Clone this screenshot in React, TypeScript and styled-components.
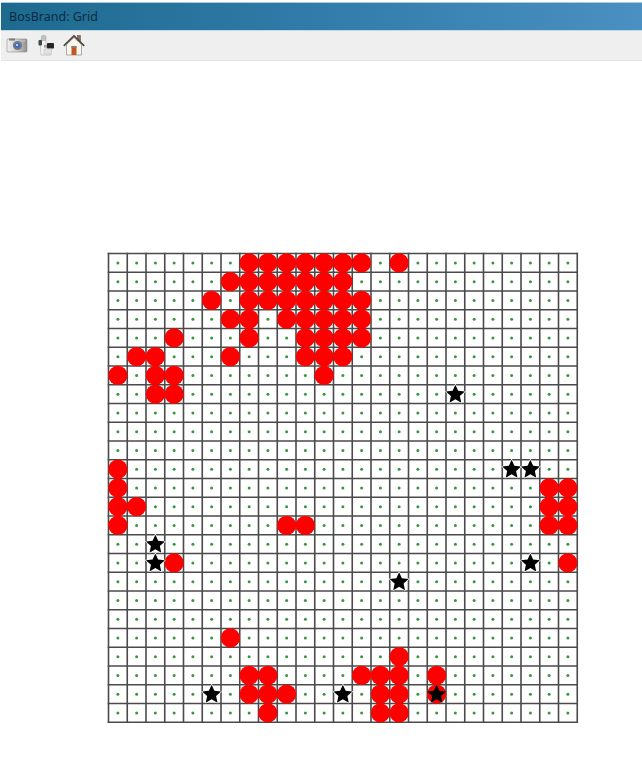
import React from "react";
import styled, { createGlobalStyle } from "styled-components";

const GlobalStyle = createGlobalStyle`
  html, body {
    margin: 0;
    padding: 0;
    background: #fff;
    font-family: "Noto Sans", "Liberation Sans", sans-serif;
  }
`;

const Window = styled.div`
  width: 642px;
  height: 774px;
  padding: 2px 0 0 1px;
  box-sizing: border-box;
  overflow: hidden;
`;

const TitleBar = styled.div`
  height: 29px;
  box-sizing: border-box;
  display: flex;
  align-items: center;
  padding-left: 8px;
  font-size: 12.5px;
  color: #0c2a3f;
  background: linear-gradient(90deg, #1d6a8f 0%, #2f7aa6 45%, #4a90c2 100%);
  border-top: 1px solid #a9cadf;
  border-bottom: 1px solid #c0d8e8;
`;

const Toolbar = styled.div`
  height: 30px;
  box-sizing: border-box;
  display: flex;
  align-items: center;
  gap: 6.5px;
  padding: 0 0 2px 5px;
  background: #efefef;
  border-bottom: 1px solid #e6e6e6;
`;

const ToolIcon = styled.svg`
  width: 22px;
  height: 22px;
  display: block;
  filter: blur(0.4px);
`;

const Board = styled.div`
  padding: 191px 0 0 106px;
`;

const GridSvg = styled.svg`
  display: block;
  filter: blur(0.4px);
`;

const SIZE = 25;
const CELL = 18.75;
const PAD = 1.5;

// row -> columns holding a red marker
const circles: Record<number, number[]> = {
  0: [7, 8, 9, 10, 11, 12, 13, 15],
  1: [6, 7, 8, 9, 10, 11, 12],
  2: [5, 7, 8, 9, 10, 11, 12, 13],
  3: [6, 7, 9, 10, 11, 12, 13],
  4: [3, 7, 10, 11, 12, 13],
  5: [1, 2, 6, 10, 11, 12],
  6: [0, 2, 3, 11],
  7: [2, 3],
  11: [0],
  12: [0, 23, 24],
  13: [0, 1, 23, 24],
  14: [0, 9, 10, 23, 24],
  16: [3, 24],
  20: [6],
  21: [15],
  22: [7, 8, 13, 14, 15, 17],
  23: [7, 8, 9, 14, 15, 17],
  24: [8, 14, 15],
};

const stars: [number, number][] = [
  [7, 18],
  [11, 21],
  [11, 22],
  [15, 2],
  [16, 2],
  [16, 22],
  [17, 15],
  [23, 5],
  [23, 12],
  [23, 17],
];

const starPoints = (cx: number, cy: number, outer: number) => {
  const pts: string[] = [];
  for (let i = 0; i < 10; i++) {
    const r = i % 2 === 0 ? outer : outer * 0.47;
    const a = (Math.PI / 5) * i - Math.PI / 2;
    pts.push(`${(cx + r * Math.cos(a)).toFixed(2)},${(cy + r * Math.sin(a)).toFixed(2)}`);
  }
  return pts.join(" ");
};

const center = (i: number) => PAD + CELL * (i + 0.5);

function Grid() {
  const span = CELL * SIZE;
  const lines = Array.from({ length: SIZE + 1 }, (_, i) => PAD + CELL * i);
  const cells = Array.from({ length: SIZE }, (_, i) => i);
  return (
    <GridSvg width={span + 3} height={span + 3}>
      {lines.map((p) => (
        <g key={p} stroke="#4a4a4a" strokeWidth={1.6}>
          <line x1={p} y1={PAD - 0.8} x2={p} y2={PAD + span + 0.8} />
          <line x1={PAD - 0.8} y1={p} x2={PAD + span + 0.8} y2={p} />
        </g>
      ))}
      {cells.map((r) =>
        cells.map((c) => <circle key={`${r}-${c}`} cx={center(c)} cy={center(r)} r={1.5} fill="#38963f" />)
      )}
      {Object.entries(circles).map(([r, cols]) =>
        cols.map((c) => <circle key={`c${r}-${c}`} cx={center(c)} cy={center(Number(r))} r={9.6} fill="#ff0000" />)
      )}
      {stars.map(([r, c]) => (
        <polygon
          key={`s${r}-${c}`}
          points={starPoints(center(c), center(r) + 0.5, 10)}
          fill="#000"
          stroke={circles[r]?.includes(c) ? "none" : "#fff"}
          strokeWidth={1.2}
          strokeLinejoin="round"
          paintOrder="stroke"
        />
      ))}
    </GridSvg>
  );
}

function CameraIcon() {
  return (
    <ToolIcon viewBox="0 0 22 22">
      <defs>
        <linearGradient id="cam" x1="0" x2="1" y1="0" y2="0">
          <stop offset="0" stopColor="#f0f0f0" />
          <stop offset="0.5" stopColor="#d0d0d0" />
          <stop offset="1" stopColor="#8f8f8f" />
        </linearGradient>
      </defs>
      <rect x="1" y="5" width="20" height="13" rx="1" fill="url(#cam)" stroke="#8c8c8c" strokeWidth="0.6" />
      <rect x="3" y="4.5" width="6" height="2" fill="#7c7c7c" />
      <rect x="15" y="6" width="4" height="1.5" fill="#bcbcbc" />
      <circle cx="11.5" cy="11.5" r="4.6" fill="#777a80" />
      <circle cx="11.5" cy="11.5" r="2.8" fill="#3a6fc0" />
      <circle cx="11" cy="11" r="1" fill="#e4edf9" />
    </ToolIcon>
  );
}

function ScannerIcon() {
  return (
    <ToolIcon viewBox="0 0 22 22">
      <path d="M5 6 H11 V19 H16 V21 H6 Z" fill="#f4f4f4" stroke="#b0b0b0" strokeWidth="0.6" />
      <rect x="6.5" y="1.5" width="4.5" height="5" rx="1.5" fill="#c4c4c4" stroke="#999" strokeWidth="0.5" />
      <rect x="3.5" y="6" width="3.5" height="5.5" rx="1" fill="#3a4a3c" />
      <rect x="12" y="9" width="7" height="5.5" rx="0.8" fill="#262626" />
      <rect x="9" y="11" width="3" height="2.5" fill="#a0a0a0" />
      <path d="M9 15 H17 L16 20 H9 Z" fill="#e2e2e2" stroke="#b8b8b8" strokeWidth="0.5" />
    </ToolIcon>
  );
}

function HomeIcon() {
  return (
    <ToolIcon viewBox="0 0 22 22">
      <rect x="14.5" y="1.5" width="3" height="6" fill="#8b6f5a" stroke="#5a463a" strokeWidth="0.5" />
      <path d="M3.5 10.5 V21 H18.5 V10.5 L11 3.5 Z" fill="#f8f5ee" stroke="#8e8e86" strokeWidth="0.7" />
      <path d="M0.8 11.8 L11 1.8 L21.2 11.8" fill="none" stroke="#4f4a44" strokeWidth="1.8" strokeLinejoin="round" />
      <rect x="8.5" y="12" width="5" height="9" fill="#c2561c" />
      <rect x="8.5" y="12" width="5" height="2" fill="#8f7a66" />
    </ToolIcon>
  );
}

export default function App() {
  return (
    <>
      <GlobalStyle />
      <Window>
        <TitleBar>BosBrand: Grid</TitleBar>
        <Toolbar>
          <CameraIcon />
          <ScannerIcon />
          <HomeIcon />
        </Toolbar>
        <Board>
          <Grid />
        </Board>
      </Window>
    </>
  );
}
